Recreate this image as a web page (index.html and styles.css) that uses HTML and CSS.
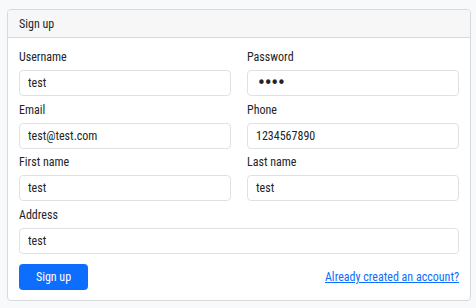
FILE: index.html
```html
<!DOCTYPE html>
<html>
<head>
<meta charset="utf-8">
<link rel="stylesheet" href="styles.css">
</head>
<body>
<div class="card">
  <div class="card-header">Sign up</div>
  <form class="card-body">
    <div class="grid">
      <div class="field">
        <label>Username</label>
        <input class="input" type="text" value="test">
      </div>
      <div class="field">
        <label>Password</label>
        <input class="input pw" type="password" value="test">
      </div>
      <div class="field">
        <label>Email</label>
        <input class="input" type="text" value="test@test.com">
      </div>
      <div class="field">
        <label>Phone</label>
        <input class="input" type="text" value="1234567890">
      </div>
      <div class="field">
        <label>First name</label>
        <input class="input" type="text" value="test">
      </div>
      <div class="field">
        <label>Last name</label>
        <input class="input" type="text" value="test">
      </div>
      <div class="field full">
        <label>Address</label>
        <input class="input" type="text" value="test">
      </div>
    </div>
    <div class="actions">
      <button type="button" class="btn">Sign up</button>
      <a href="#" class="link">Already created an account?</a>
    </div>
  </form>
</div>
</body>
</html>
```
FILE: styles.css
```css
html, body {
  margin: 0;
  background: #f8f9fa;
}
body {
  padding: 9px 5px 0 7px;
  font-family: "Roboto Condensed", Roboto, sans-serif;
  font-size: 12px;
  color: #212529;
}
.card {
  width: 464px;
  box-sizing: border-box;
  background: #fff;
  border: 1px solid #d7d9db;
  border-radius: 4px;
  overflow: hidden;
}
.card-header {
  height: 28px;
  box-sizing: border-box;
  padding: 0 11px;
  display: flex;
  align-items: center;
  background: #f7f7f7;
  border-bottom: 1px solid #d7d9db;
}
.card-body {
  margin: 0;
  padding: 10px 11px 10px;
}
.grid {
  display: grid;
  grid-template-columns: minmax(0, 1fr) minmax(0, 1fr);
  column-gap: 16px;
  row-gap: 4.67px;
}
.field {
  display: flex;
  flex-direction: column;
  min-width: 0;
}
.full {
  grid-column: 1 / 3;
}
label {
  line-height: 18px;
  margin-bottom: 4px;
}
.input {
  height: 26px;
  min-width: 0;
  box-sizing: border-box;
  border: 1px solid #dee2e6;
  border-radius: 4px;
  padding: 0 8px;
  font: inherit;
  color: #212529;
  background: #fff;
  outline: none;
}
.pw {
  font-family: "DejaVu Sans", sans-serif;
  font-size: 15px;
  letter-spacing: -2.2px;
  padding-left: 9px;
}
.actions {
  margin-top: 10px;
  display: flex;
  justify-content: space-between;
  align-items: center;
}
.btn {
  width: 69px;
  height: 26px;
  border: none;
  border-radius: 4px;
  background: #0d6efd;
  color: #fff;
  font: inherit;
  padding: 0;
}
.link {
  color: #0d6efd;
  text-decoration: underline;
}
```
